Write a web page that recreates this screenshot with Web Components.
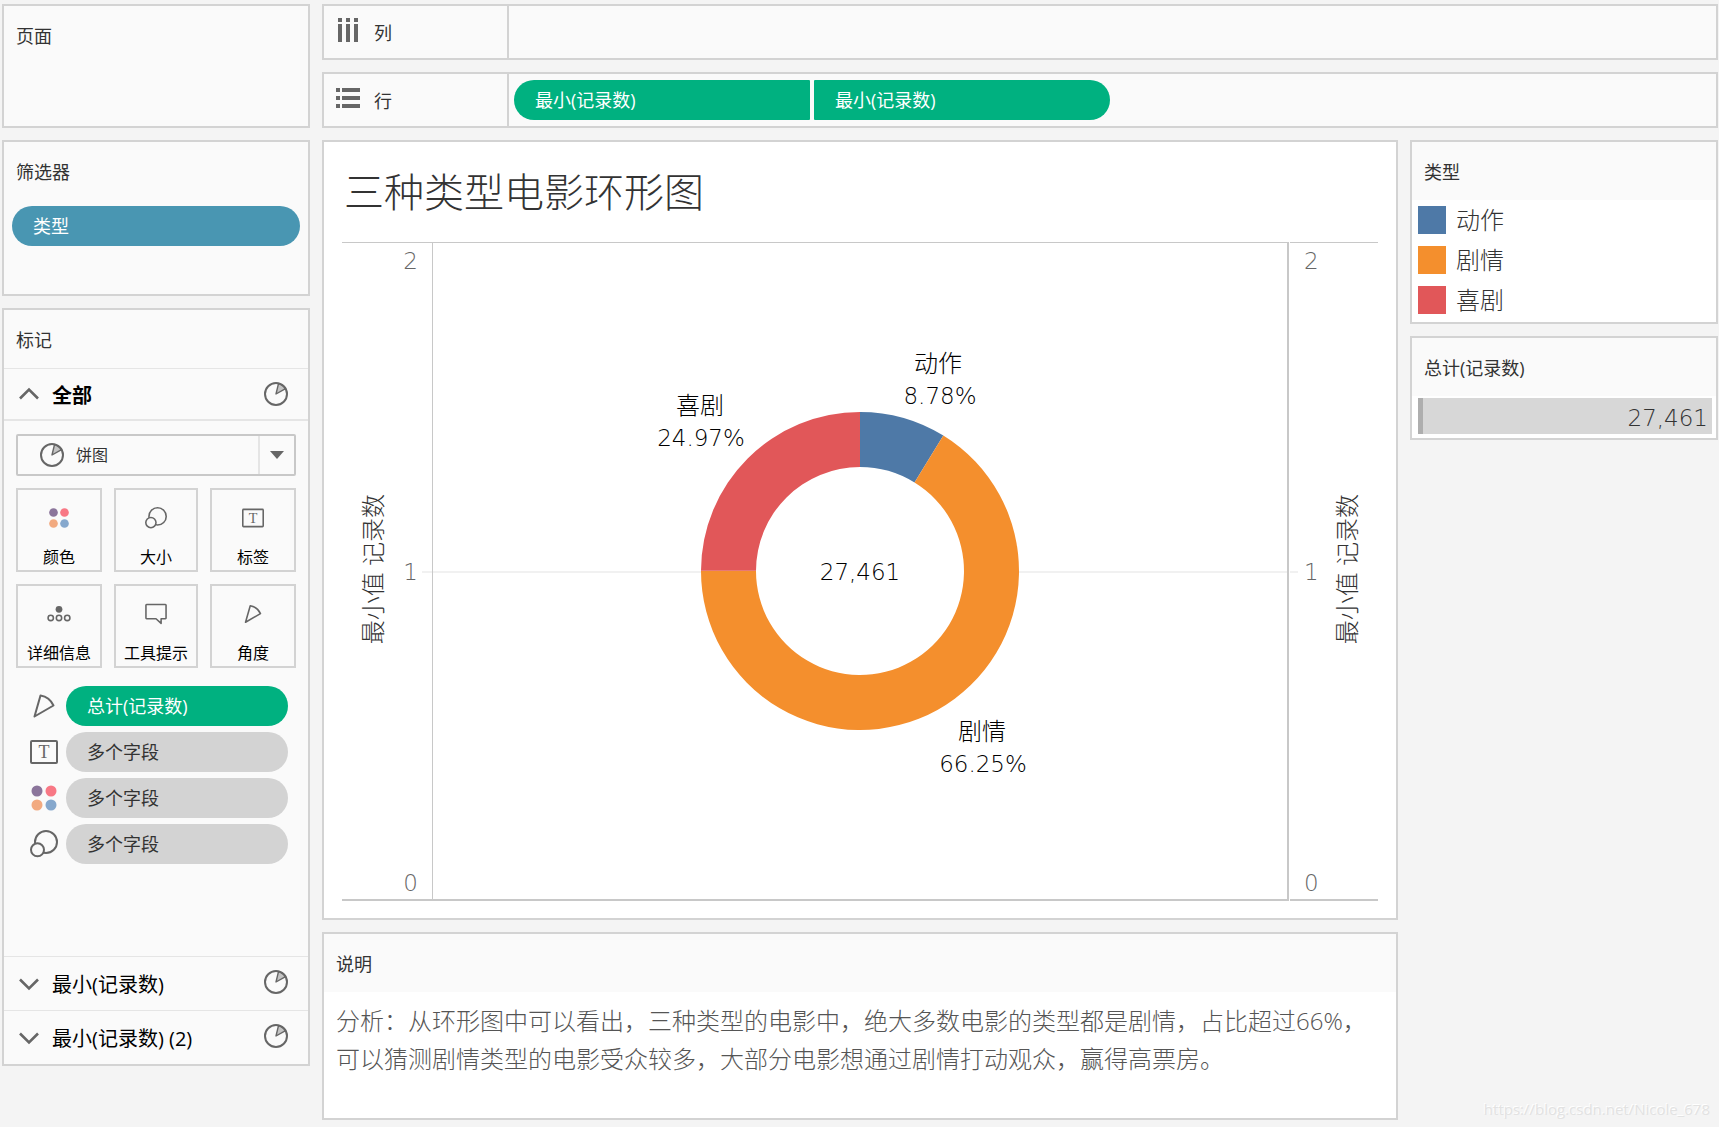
<!DOCTYPE html>
<html lang="zh-CN">
<head>
<meta charset="utf-8">
<title>三种类型电影环形图</title>
<style>
html, body { margin: 0; background: #f4f4f4; }
body { font-family: "Open Sans", "Noto Sans CJK SC", sans-serif; font-size: 18px; color: #333; --digits: "DejaVu Sans Light", "DejaVu Sans", sans-serif; }
</style>
</head>
<body>
<viz-workbook></viz-workbook>
<script>
const BASE = `:host, *, *::before, *::after { box-sizing: border-box; }
button, select { font: inherit; color: inherit; margin: 0; padding: 0; border: 0; background: none; }
button { cursor: pointer; }`;

function define(name, css, html) {
  customElements.define(name, class extends HTMLElement {
    connectedCallback() {
      if (this.shadowRoot) return;
      const root = this.attachShadow({ mode: 'open' });
      root.innerHTML = `<style>${BASE}${css}</style>` + (typeof html === 'function' ? html(this) : html);
    }
  });
}

/* Icons share a 28-unit box */
const S = 'fill="none" stroke="currentColor" stroke-width="2" stroke-linejoin="round"';
const ICONS = {
  pie: `<g transform="scale(1.1667)"><path d="M12 12 14.5 1.6A11 11 0 0 1 21.6 6.6Z" fill="#c4c4c4" stroke="currentColor" stroke-width="1.4" stroke-linejoin="round"/><circle cx="12" cy="12" r="11" fill="none" stroke="currentColor" stroke-width="2"/></g>`,
  color: `<circle cx="7" cy="7" r="5.5" fill="#8b759b"/><circle cx="21" cy="7" r="5.5" fill="#f87885"/><circle cx="7" cy="21" r="5.5" fill="#f2aa80"/><circle cx="21" cy="21" r="5.5" fill="#86a8cd"/>`,
  size: `<circle cx="16" cy="12" r="11" ${S}/><circle cx="7.5" cy="19.8" r="6.5" fill="#fafafa" stroke="currentColor" stroke-width="2"/>`,
  label: `<rect x="1" y="3" width="26" height="22" rx="1" ${S}/><text x="14" y="20" text-anchor="middle" font-family="Liberation Serif" font-size="18" fill="currentColor">T</text>`,
  detail: `<circle cx="14" cy="8" r="4.3" fill="currentColor"/><circle cx="3.5" cy="19" r="3.4" ${S}/><circle cx="14" cy="19" r="3.4" ${S}/><circle cx="24.5" cy="19" r="3.4" ${S}/>`,
  tooltip: `<path d="M2 2H26a.8.8 0 0 1 .8.8V19.200a.8.8 0 0 1-.8.8H20.500V26L14 20H2a.8.8 0 0 1-.8-.8V2.800A.8.8 0 0 1 2 2Z" ${S}/>`,
  angle: `<path d="M10.500 3.500Q19.500 5 23.500 13.500L4.500 24.500Z" ${S}/>`,
  up: `<path d="M5 18.500 14 9.500 23 18.500" fill="none" stroke="currentColor" stroke-width="2.600"/>`,
  down: `<path d="M5 9.500 14 18.500 23 9.500" fill="none" stroke="currentColor" stroke-width="2.600"/>`,
  caret: `<path d="M7 10H21L14 18Z" fill="currentColor"/>`,
  columns: `<path d="M4 0h4v4H4zM12 0h4v4h-4zM20 0h4v4h-4zM4 6h4v18H4zM12 6h4v18h-4zM20 6h4v18h-4z" fill="currentColor"/>`,
  rows: `<path d="M2 2h4v4H2zM8 2h18v4H8zM2 10h4v4H2zM8 10h18v4H8zM2 18h4v4H2zM8 18h18v4H8z" fill="currentColor"/>`
};
define('viz-icon', `:host { display: block; flex: none; width: 28px; height: 28px; color: #666; }
svg { display: block; width: 100%; height: 100%; overflow: visible; }`,
  el => `<svg viewBox="0 0 28 28" aria-hidden="true">${ICONS[el.getAttribute('name')]}</svg>`);

define('viz-card', `:host { display: flex; flex-direction: column; border: 2px solid #d3d3d3; background: #fafafa; }
h2 { height: 58px; margin: 0; padding: 0 12px; font-size: 18px; font-weight: 400; line-height: 60px; }
.body { flex: 1; }
:host([paper]) .body { background: #fff; }`,
  el => `<h2>${el.getAttribute('heading')}</h2><div class="body"><slot></slot></div>`);

define('viz-pill', `:host { display: block; }
button { display: block; width: 100%; height: 40px; padding: 0 21px 2px; border-radius: 20px; text-align: left; color: #fff; background: #00b180; }
:host([tone="dimension"]) button { background: #4996b2; }
:host([tone="mixed"]) button { background: #d3d3d3; color: #333; }
:host([part-of="start"]) button { border-radius: 20px 1px 1px 20px; }
:host([part-of="end"]) button { border-radius: 1px 20px 20px 1px; }`,
  `<button type="button"><slot></slot></button>`);

define('viz-shelf', `:host { display: flex; height: 56px; border: 2px solid #d3d3d3; background: #fafafa; }
.name { display: flex; align-items: center; gap: 12px; width: 185px; padding-left: 10px; border-right: 2px solid #d3d3d3; }
.drop { flex: 1; display: flex; align-items: center; gap: 4px; padding: 0 5px; }
::slotted(viz-pill) { width: 296px; }`,
  el => `<div class="name"><viz-icon name="${el.getAttribute('icon')}"></viz-icon><span>${el.getAttribute('name')}</span></div><div class="drop"><slot></slot></div>`);

define('viz-mark-button', `:host { display: block; }
button { display: flex; flex-direction: column; align-items: center; justify-content: flex-end; gap: 16px; width: 100%; height: 84px; padding-bottom: 1px; border: 2px solid #d3d3d3; font-size: 16px; line-height: 24px; color: #000; white-space: nowrap; }
viz-icon { width: 22px; height: 22px; }`,
  el => `<button type="button"><viz-icon name="${el.getAttribute('icon')}"></viz-icon><span><slot></slot></span></button>`);

define('viz-mark-row', `:host { display: block; border-top: 1px solid #e5e5e5; color: #000; font-size: 20px; }
button { display: flex; align-items: center; width: 100%; height: 53px; padding: 0 20px 0 11px; text-align: left; }
:host([open]) { border-bottom: 2px solid #e5e5e5; font-weight: 700; }
:host([open]) button { height: 50px; }
span { flex: 1; padding-left: 9px; }
.pie { width: 24px; height: 24px; }
:host(:not([open])) .pie { margin-bottom: 3px; }`,
  el => `<button type="button" aria-expanded="${el.hasAttribute('open')}"><viz-icon name="${el.hasAttribute('open') ? 'up' : 'down'}"></viz-icon><span><slot></slot></span><viz-icon class="pie" name="pie"></viz-icon></button>`);

define('viz-encoding', `:host { display: flex; align-items: center; gap: 8px; }
viz-pill { flex: 1; }`,
  el => `<viz-icon name="${el.getAttribute('icon')}"></viz-icon><viz-pill tone="${el.getAttribute('tone')}"><slot></slot></viz-pill>`);

define('viz-marks', `:host { display: block; }
.type { display: grid; grid-template-columns: 1fr 36px; align-items: center; margin: 13px 12px 12px; height: 42px; border: 2px solid #c8c8c8; border-radius: 2px; }
select { grid-area: 1 / 1 / 2 / 3; width: 100%; height: 38px; padding-left: 58px; appearance: none; font-size: 16px; cursor: pointer; }
.type viz-icon { pointer-events: none; grid-row: 1; }
.kind { grid-column: 1; margin-left: 22px; width: 24px; height: 24px; }
.arrow { grid-column: 2; display: flex; align-items: center; justify-content: center; height: 38px; border-left: 2px solid #e5e5e5; pointer-events: none; grid-row: 1; }
.buttons { display: grid; grid-template-columns: 43fr 42fr 43fr; gap: 12px; margin: 0 12px; }
.encodings { display: flex; flex-direction: column; gap: 6px; min-height: 288px; padding: 18px 20px 18px 26px; }`,
  `<viz-mark-row open>全部</viz-mark-row>
<div class="type">
  <select aria-label="标记类型"><option>饼图</option></select>
  <viz-icon class="kind" name="pie"></viz-icon>
  <div class="arrow"><viz-icon name="caret"></viz-icon></div>
</div>
<div class="buttons">
  <viz-mark-button icon="color">颜色</viz-mark-button>
  <viz-mark-button icon="size">大小</viz-mark-button>
  <viz-mark-button icon="label">标签</viz-mark-button>
  <viz-mark-button icon="detail">详细信息</viz-mark-button>
  <viz-mark-button icon="tooltip">工具提示</viz-mark-button>
  <viz-mark-button icon="angle">角度</viz-mark-button>
</div>
<div class="encodings">
  <viz-encoding icon="angle" tone="measure">总计(记录数)</viz-encoding>
  <viz-encoding icon="label" tone="mixed">多个字段</viz-encoding>
  <viz-encoding icon="color" tone="mixed">多个字段</viz-encoding>
  <viz-encoding icon="size" tone="mixed">多个字段</viz-encoding>
</div>
<viz-mark-row>最小(记录数)</viz-mark-row>
<viz-mark-row>最小(记录数) (2)</viz-mark-row>`);

define('viz-axis', `:host { display: flex; align-items: stretch; justify-content: space-between; width: 90px; padding-left: 16px; font-size: 24px; font-weight: 300; border-bottom: 2px solid #c8c8c8; border-top: 1px solid #c8c8c8; }
:host([side="right"]) { flex-direction: row-reverse; width: 88px; padding: 0 16px 0 0; margin-left: 1px; }
.title { align-self: center; margin-bottom: 4px; line-height: 30px; writing-mode: vertical-rl; text-orientation: sideways; transform: rotate(180deg); white-space: nowrap; color: #333; }
.ticks { display: flex; flex-direction: column; justify-content: space-between; padding-top: 2px; color: #666; font: 200 23px/32px var(--digits); }
.ticks div { display: flex; align-items: center; justify-content: flex-end; }
.ticks div::after { content: ""; width: 10px; height: 2px; margin-left: 4px; }
.ticks .mid::after { background: #f1f1f1; }
:host([side="right"]) .ticks div { flex-direction: row-reverse; }
:host([side="right"]) .ticks div::after { width: 8px; margin: 0 6px 0 0; }`,
  `<div class="title"><slot></slot></div><div class="ticks"><div>2</div><div class="mid">1</div><div>0</div></div>`);

const COLORS = { 动作: '#4e79a7', 剧情: '#f48f2d', 喜剧: '#e15759' };
function slice(from, to, color, R = 159, r = 104) {
  const p = (t, q) => { const a = t * 2 * Math.PI; return `${(q * Math.sin(a)).toFixed(2)} ${(-q * Math.cos(a)).toFixed(2)}`; };
  const big = to - from > 0.5 ? 1 : 0;
  return `<path fill="${color}" d="M${p(from, R)}A${R} ${R} 0 ${big} 1 ${p(to, R)}L${p(to, r)}A${r} ${r} 0 ${big} 0 ${p(from, r)}Z"/>`;
}
define('viz-donut', `:host { display: flex; flex: 1; align-items: center; justify-content: center; border: solid #c8c8c8; border-width: 1px 2px 2px 1px; background: linear-gradient(#f1f1f1, #f1f1f1) 0 calc(50% + 1px) / 100% 2px no-repeat; }
svg { display: block; width: 500px; height: 500px; }
text { font-size: 24px; font-weight: 300; fill: #000; text-anchor: middle; }
.n { font: 200 23px var(--digits); }`,
  `<svg viewBox="-250 -250 500 500" role="img" aria-label="三种类型电影环形图">
<circle r="106" fill="#fff"/>
${slice(0, .0878, COLORS.动作)}${slice(.0878, .7503, COLORS.剧情)}${slice(.7503, 1, COLORS.喜剧)}
<text x="78" y="-199">动作</text><text class="n" x="80" y="-167">8.78%</text>
<text x="-160" y="-157">喜剧</text><text class="n" x="-159" y="-125">24.97%</text>
<text x="122" y="169">剧情</text><text class="n" x="123" y="201">66.25%</text>
<text class="n" x="0" y="9">27,461</text></svg>`);

define('viz-sheet', `:host { display: flex; flex-direction: column; padding: 0 18px 17px; border: 2px solid #d3d3d3; background: #fff; }
h1 { margin: 0; padding: 20px 2px; font-size: 40px; font-weight: 300; line-height: 60px; }
.chart { flex: 1; display: flex; min-height: 520px; }`,
  `<h1>三种类型电影环形图</h1>
<div class="chart"><viz-axis>最小值 记录数</viz-axis><viz-donut></viz-donut><viz-axis side="right">最小值 记录数</viz-axis></div>`);

define('viz-legend', `:host { display: block; }
ul { list-style: none; display: flex; flex-direction: column; gap: 12px; margin: 0; padding: 6px 6px 8px; }
li { display: flex; gap: 10px; height: 28px; font-size: 24px; font-weight: 300; line-height: 28px; }
i { width: 28px; height: 28px; }`,
  `<ul>${Object.entries(COLORS).map(([n, c]) => `<li><i style="background:${c}"></i>${n}</li>`).join('')}</ul>`);

define('viz-total', `:host { display: block; padding: 2px 4px 4px 6px; }
div { height: 36px; padding-right: 4px; border-left: 5px solid #aeaeae; background: #d7d7d7; text-align: right; font: 200 23px/40px var(--digits); }`,
  `<div><slot></slot></div>`);

define('viz-caption', `:host { display: block; min-height: 126px; padding: 10px 24px 20px 12px; font-size: 24px; font-weight: 300; line-height: 38px; color: #555; }
p { margin: 0; }`, `<p><slot></slot></p>`);

define('viz-workbook', `:host { display: flex; gap: 12px; min-height: 100vh; padding: 4px 1px 7px 2px; }
.left { width: 308px; flex: none; display: flex; flex-direction: column; gap: 12px; }
.pages { min-height: 124px; }
.filters { min-height: 156px; }
.filters viz-pill { padding: 6px 8px; }
.main { flex: 1; display: flex; flex-direction: column; gap: 12px; min-width: 0; }
.work { flex: 1; display: flex; gap: 12px; }
.center { flex: 1; display: flex; flex-direction: column; gap: 12px; min-width: 0; }
viz-sheet { flex: 1; }
.right { width: 308px; flex: none; display: flex; flex-direction: column; gap: 12px; }
.mark { margin: auto 8px 0 auto; font-size: 15px; line-height: 22px; color: #e2e2e2; text-shadow: -1px -1px #fff; text-decoration: none; }`,
  `<aside class="left">
  <viz-card class="pages" heading="页面"></viz-card>
  <viz-card class="filters" heading="筛选器"><viz-pill tone="dimension">类型</viz-pill></viz-card>
  <viz-card heading="标记"><viz-marks></viz-marks></viz-card>
</aside>
<main class="main">
  <viz-shelf icon="columns" name="列"></viz-shelf>
  <viz-shelf icon="rows" name="行"><viz-pill part-of="start">最小(记录数)</viz-pill><viz-pill part-of="end">最小(记录数)</viz-pill></viz-shelf>
  <div class="work">
    <div class="center">
      <viz-sheet></viz-sheet>
      <viz-card paper heading="说明"><viz-caption>分析：从环形图中可以看出，三种类型的电影中，绝大多数电影的类型都是剧情，占比超过66%，可以猜测剧情类型的电影受众较多，大部分电影想通过剧情打动观众，赢得高票房。</viz-caption></viz-card>
    </div>
    <aside class="right">
      <viz-card paper heading="类型"><viz-legend></viz-legend></viz-card>
      <viz-card paper heading="总计(记录数)"><viz-total>27,461</viz-total></viz-card>
      <a class="mark" href="https://blog.csdn.net/Nicole_678">https://blog.csdn.net/Nicole_678</a>
    </aside>
  </div>
</main>`);
</script>
</body>
</html>
